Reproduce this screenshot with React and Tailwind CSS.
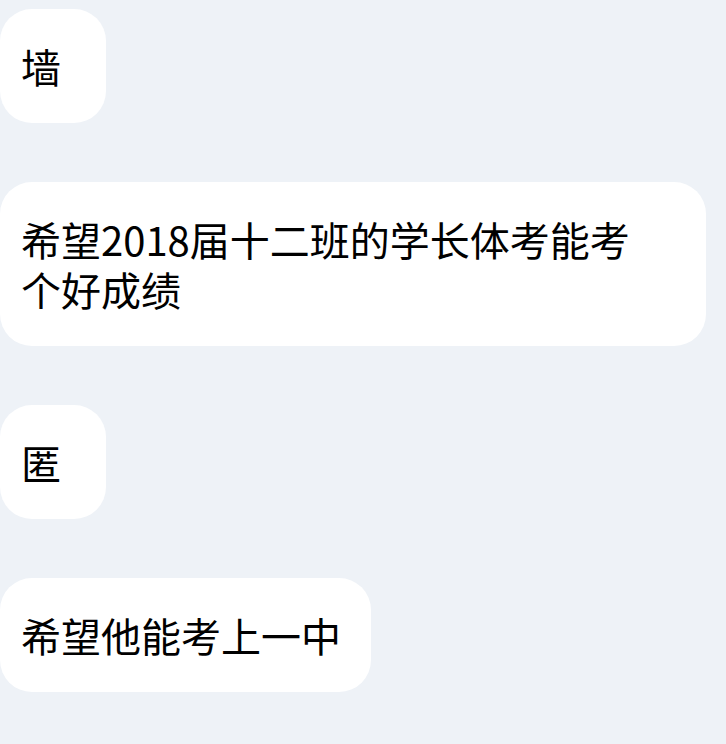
const messages = [
  { text: '墙' },
  { text: '希望2018届十二班的学长体考能考个好成绩', wide: true },
  { text: '匿' },
  { text: '希望他能考上一中' },
]

function Bubble({ text, wide }) {
  return (
    <div
      className={
        wide
          ? 'w-[706px] rounded-[32px] bg-white pl-[21px] pr-[30px] py-[32px] text-[40px] leading-[50px] text-black'
          : 'w-fit min-w-[106px] rounded-[32px] bg-white pl-[21px] pr-[30px] py-[32px] text-[40px] leading-[50px] text-black'
      }
    >
      <p className="max-w-[640px]">{text}</p>
    </div>
  )
}

export default function App() {
  return (
    <div
      className="min-h-[744px] w-full bg-[#eef2f7] pt-[9px] flex flex-col gap-[59px]"
      style={{ fontFamily: '"Noto Sans CJK SC", "Noto Sans", sans-serif' }}
    >
      {messages.map((m, i) => (
        <Bubble key={i} text={m.text} wide={m.wide} />
      ))}
    </div>
  )
}
